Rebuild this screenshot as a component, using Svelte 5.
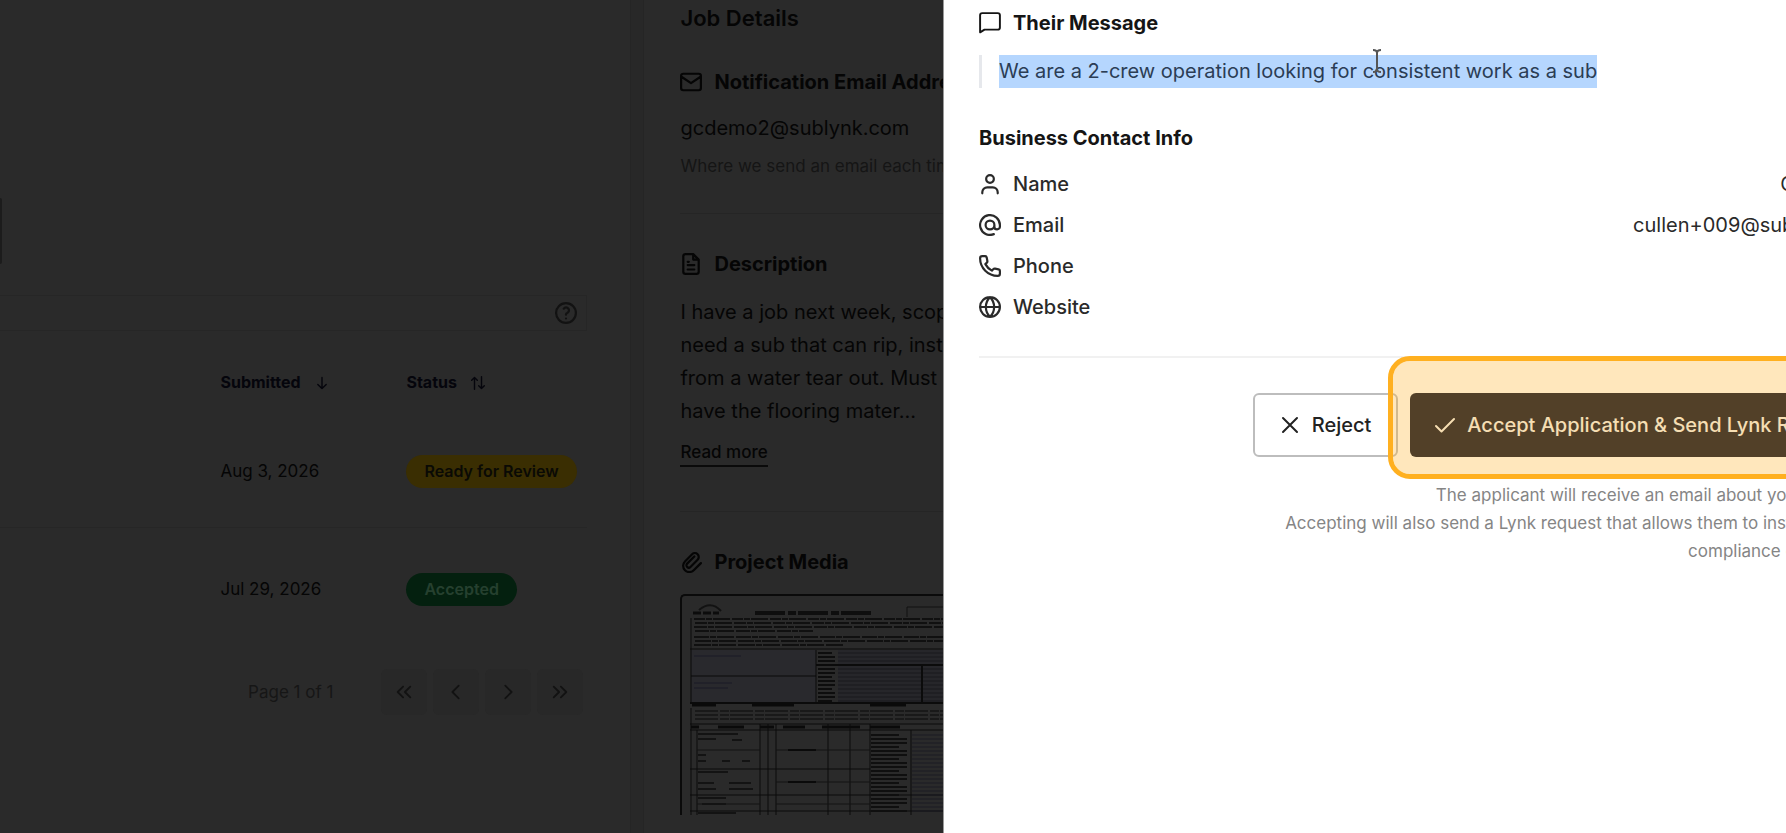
<script>
  const contacts = [
    { icon: 'user', label: 'Name', value: 'Cullen Lee' },
    { icon: 'at', label: 'Email', value: 'cullen+009@sublynk.com' },
    { icon: 'phone', label: 'Phone', value: '' },
    { icon: 'globe', label: 'Website', value: '' }
  ];
  const rows = [
    { date: 'Aug 3, 2026', status: 'Ready for Review', tone: 'review' },
    { date: 'Jul 29, 2026', status: 'Accepted', tone: 'accepted' }
  ];
  const description = [
    'I have a job next week, scope',
    'need a sub that can rip, install',
    'from a water tear out. Must',
    'have the flooring mater...'
  ];
  const pager = [
    { label: 'First page', icon: 'first' },
    { label: 'Previous page', icon: 'prev' },
    { label: 'Next page', icon: 'next' },
    { label: 'Last page', icon: 'last' }
  ];
  const paths = {
    message: 'M3 20.5V5a2 2 0 0 1 2-2h14a2 2 0 0 1 2 2v11a2 2 0 0 1-2 2H7l-4 2.500z',
    user: 'M12 4a3.500 3.500 0 1 1 0 7a3.500 3.500 0 0 1 0-7M5 20.500v-1a4.500 4.500 0 0 1 4.500-4.500h5a4.500 4.500 0 0 1 4.500 4.500v1',
    at: 'M16 12a4 4 0 1 1-8 0a4 4 0 0 1 8 0v1.5a2.5 2.5 0 0 0 5 0V12a9 9 0 1 0-5.5 8.3',
    phone: 'M5 3h2.500a1.500 1.500 0 0 1 1.500 1.200l.6 3.200q.2 1-.6 1.700l-1.200 1.200a14 14 0 0 0 5.900 5.900l1.200-1.200q.7-.8 1.700-.6l3.200.6a1.500 1.500 0 0 1 1.200 1.500V19a2 2 0 0 1-2 2A16 16 0 0 1 3 5a2 2 0 0 1 2-2z',
    globe: 'M12 3a9 9 0 1 0 0 18a9 9 0 0 0 0-18M3 12h18M12 3c-5 5-5 13 0 18M12 3c5 5 5 13 0 18',
    mail: 'M5 4.500h14a2 2 0 0 1 2 2v11a2 2 0 0 1-2 2H5a2 2 0 0 1-2-2v-11a2 2 0 0 1 2-2M3 7l9 6l9-6',
    file: 'M14 3v5h5M17 21H7a2 2 0 0 1-2-2V5a2 2 0 0 1 2-2h7l5 5v11a2 2 0 0 1-2 2zM9 10h1M9 13h6M9 17h6',
    clip: 'M15 7l-6.5 6.5a1.5 1.5 0 0 0 3 3L18 10a3 3 0 0 0-5-5l-6.500 6.500a5.500 5.500 0 0 0 8 8L21 13',
    close: 'M5 5l14 14M19 5L5 19',
    check: 'M3 13l5.500 5.500L21 6',
    down: 'M12 4v16M6 14l6 6l6-6',
    sort: 'M7 21V4M3 8l4-4l4 4M17 3v17M13 16l4 4l4-4',
    help: 'M12 3a9 9 0 1 0 0 18a9 9 0 0 0 0-18M12 17v.01M12 13.500a1.500 1.500 0 0 1 1-1.500a2.600 2.600 0 1 0-3-4',
    first: 'M11 6l-6 6l6 6M19 6l-6 6l6 6',
    prev: 'M15 5l-7 7l7 7',
    next: 'M9 5l7 7l-7 7',
    last: 'M5 6l6 6l-6 6M13 6l6 6l-6 6'
  };
  const fineLines = [23, 27, 31, 35, 41, 45, 49];
  const formLines = Array.from({ length: 13 }, (_, i) => 57 + i * 4);
  const tableLines = Array.from({ length: 20 }, (_, i) => 139 + i * 4);
</script>

{#snippet icon(name, size = 22, weight = 2)}
  <svg class="icon" width={size} height={size} viewBox="2 2 20 20" fill="none" stroke="currentColor"
    stroke-width={weight} stroke-linecap="round" stroke-linejoin="round" aria-hidden="true">
    <path d={paths[name]} />
  </svg>
{/snippet}

<div class="page">
  <main>
    <div class="stub"></div>
    <div class="toolbar">
      <button class="plain" aria-label="Help">{@render icon('help')}</button>
    </div>
    <table>
      <thead>
        <tr>
          <th class="lead"></th>
          <th><button class="sorter">Submitted {@render icon('down', 14)}</button></th>
          <th><button class="sorter">Status {@render icon('sort', 14)}</button></th>
        </tr>
      </thead>
      <tbody>
        {#each rows as row}
          <tr>
            <td></td>
            <td>{row.date}</td>
            <td><span class="badge {row.tone}">{row.status}</span></td>
          </tr>
        {/each}
      </tbody>
    </table>
    <nav aria-label="Pages">
      <span>Page 1 of 1</span>
      <div class="pager">
        {#each pager as p}
          <button aria-label={p.label}>{@render icon(p.icon, 18)}</button>
        {/each}
      </div>
    </nav>
  </main>

  <div class="gutter"></div>

  <aside>
    <h1>Job Details</h1>
    <section>
      <h2>{@render icon('mail')}Notification Email Address</h2>
      <p class="email">gcdemo2@sublynk.com</p>
      <p class="hint">Where we send an email each time</p>
    </section>
    <section>
      <h2>{@render icon('file')}Description</h2>
      <p class="description">
        {#each description as line}<span>{line}</span>{/each}
      </p>
      <button class="more">Read more</button>
    </section>
    <section>
      <h2>{@render icon('clip')}Project Media</h2>
      <div class="media">
        <svg width="420" height="219" viewBox="0 0 420 219" role="img" aria-label="Certificate of liability insurance">
          <path d="M11 17h8M21 17h8M31 17h6" stroke="#0c0c0c" stroke-width="3" />
          <path d="M17 14q12-10 22 1" fill="none" stroke="#121212" stroke-width="2" />
          <path d="M73 17h119" stroke="#0e0e0e" stroke-width="4" stroke-dasharray="30 3 8 2" />
          <path d="M225 21v-10h100" fill="none" stroke="#101010" />
          {#each fineLines as y, i}
            <path d="M{12 + (i % 2)} {y}h{i === 3 ? 118 : i === 6 ? 150 : 400}" stroke="#101010" stroke-width="2"
              stroke-dasharray="{11 + i} 1 6 1 17 2" />
          {/each}
          <rect x="9" y="54" width="125" height="52" fill="#29292d" />
          <rect x="156" y="54" width="260" height="52" fill="#26262a" />
          <path d="M9 22V106M8 53H400M9 80H134M134 54V106" fill="none" stroke="#0b0b0b" />
          <path d="M12 60h47M12 87h38M12 92h34" stroke="#1b1b27" stroke-width="1" />
          {#each formLines as y, i}
            <path d="M136 {y}h{i % 3 ? 17 : 14}" stroke="#0d0d0d" stroke-width="2" />
            <path d="M156 {y}h240" stroke="#18181c" />
          {/each}
          <path d="M134 69H400M240 69V106M8 107H400" stroke="#0b0b0b" stroke-width="2" />
          <path d="M10 109h24M70 109h42M188 109h36" stroke="#0a0a0a" stroke-width="3" />
          <path d="M13 115h380M13 119h370M13 123h380" stroke="#191919" stroke-width="2" stroke-dasharray="23 2 9 1" />
          <path d="M8 128H400M8 134H400M8 173H188M8 199H400M8 215H400" stroke="#0a0a0a" stroke-width="1" />
          <path d="M9 131h8M36 131h26M78 131h14M101 131h22M140 131h38M188 131h30" stroke="#0a0a0a" stroke-width="3" />
          <path d="M9 112V219M15 134V219M78 128V219M86 128V219M94 128V219M146 128V219M168 128V219M188 128V219M229 134V219"
            fill="none" stroke="#0b0b0b" />
          <path d="M15 154h63M94 154h94M94 186h94M15 208h63M94 208h94" stroke="#121212" />
          <path d="M106 154h28M106 186h28" stroke="#0a0a0a" stroke-width="2" />
          <path d="M16 138h40M16 143h18M50 144h10M16 159h8M16 165h8M40 165h8M60 165h8M16 176h30M16 187h16M47 187h22M16 193h18M47 193h24M16 202h28M20 208h24M16 217h38"
            stroke="#131313" stroke-width="2" />
          {#each tableLines as y, i}
            <path d="M189 {y}h{i % 3 ? 36 : 28}" stroke="#0f0f0f" stroke-width="2" />
            <path d="M230 {y}h170" stroke="#1a1a22" />
          {/each}
        </svg>
      </div>
    </section>
  </aside>

  <div class="drawer" role="dialog" aria-label="Application">
    <h2>{@render icon('message', 22, 1.75)}Their Message</h2>
    <blockquote>
      <mark>We are a 2-crew operation looking for consistent work as a sub</mark>
      <svg class="caret" width="10" height="24" viewBox="0 0 10 24" fill="none" stroke="#555" stroke-width="2" aria-hidden="true">
        <path d="M1 1q4 0 4 3v16q0 3-4 3M9 1q-4 0-4 3v16q0 3 4 3" />
      </svg>
    </blockquote>
    <h2>Business Contact Info</h2>
    <dl>
      {#each contacts as c}
        <div>
          <dt>{@render icon(c.icon)}{c.label}</dt>
          <dd>{c.value}</dd>
        </div>
      {/each}
    </dl>
    <footer>
      <div class="actions">
        <button class="reject">{@render icon('close', 20)}Reject</button>
        <div class="spot">
          <button class="accept">{@render icon('check', 20)}Accept Application &amp; Send Lynk Request</button>
        </div>
      </div>
      <p>The applicant will receive an email about your decision.<br />
        Accepting will also send a Lynk request that allows them to instantly share<br />
        compliance documents.</p>
    </footer>
  </div>
</div>

<style>
  :global(body) { margin: 0; background: #2a2a2a; }
  .page {
    position: relative;
    display: flex;
    height: 100vh;
    overflow: hidden;
    background: #2a2a2a;
    color: #050505;
    font: 400 20px/33px Inter, sans-serif;
  }
  h1, h2, p, dl, dd, blockquote { margin: 0; }
  button { font: inherit; color: inherit; cursor: pointer; }
  .icon { flex: none; display: block; }
  h2 {
    display: flex;
    align-items: center;
    gap: 12px;
    font-size: 20px;
    line-height: 32px;
    font-weight: 700;
    white-space: nowrap;
  }

  main { flex: 0 0 35.3%; box-sizing: border-box; padding-right: 43px; font-size: 17px; }
  .stub { width: 2px; height: 66px; margin-top: 198px; background: #1c1c1c; border-radius: 0 4px 4px 0; }
  .toolbar {
    display: flex;
    justify-content: flex-end;
    align-items: center;
    height: 34px;
    margin-top: 31px;
    padding-right: 9px;
    border: 1px solid #262626;
    border-left: 0;
  }
  .plain { padding: 0; border: 0; background: none; color: #121212; }
  table { width: 100%; border-collapse: collapse; table-layout: fixed; margin-top: 24px; }
  th, td { padding: 0; text-align: left; }
  th { width: 186px; height: 55px; }
  th:last-child { width: 181px; }
  .lead { width: auto; }
  td { height: 111px; padding-top: 6px; border-bottom: 1px solid #262626; }
  tr:last-child td { border: 0; }
  .sorter {
    display: flex;
    align-items: center;
    gap: 14px;
    padding: 0;
    border: 0;
    background: none;
    font-size: 16px;
    font-weight: 700;
    color: #05050c;
  }
  .badge {
    display: inline-block;
    padding: 0 18px;
    border-radius: 17px;
    font-size: 16px;
    font-weight: 600;
    white-space: nowrap;
  }
  .review { background: #3a2e02; color: #0a0a05; }
  .accepted { background: #04200f; color: #26402f; }
  nav {
    display: flex;
    justify-content: flex-end;
    align-items: center;
    gap: 48px;
    margin-top: 24px;
    padding-right: 4px;
    color: #161616;
  }
  .pager { display: flex; gap: 6px; }
  .pager button {
    display: grid;
    place-items: center;
    width: 46px;
    height: 46px;
    padding: 0;
    border: 0;
    border-radius: 6px;
    background: #282828;
    color: #121212;
  }

  .gutter { flex: none; width: 12px; background: #282828; border: solid #252525; border-width: 0 1px; }

  aside { flex: none; box-sizing: border-box; width: calc(17.5% - 14px); overflow: hidden; padding-left: 36px; }
  h1 { font-size: 22px; line-height: 36px; font-weight: 600; }
  section { padding-bottom: 30px; border-bottom: 1px solid #252525; }
  section + section { padding-top: 34px; }
  h1 + section { padding-top: 30px; }
  section:last-child { border: 0; }
  .email { margin-top: 14px; }
  .hint { margin-top: 5px; font-size: 17px; color: #151515; white-space: nowrap; }
  .description { margin-top: 16px; }
  .description span { display: block; white-space: nowrap; }
  .more { display: block; margin: 11px 0 14px; padding: 0; border: 0; border-bottom: 2px solid #0a0a0a; background: none; font-size: 17px; line-height: 26px; font-weight: 500; }
  .media { margin-top: 16px; width: 420px; height: 219px; border: solid #0a0a0a; border-width: 2px 0 0 2px; border-radius: 5px 0 0 0; overflow: hidden; }

  .drawer {
    position: absolute;
    top: 0;
    bottom: 0;
    left: 52.8%;
    right: -94px;
    box-sizing: border-box;
    padding: 7px 0 0 35px;
    border-left: 1px solid #999;
    background: #fff;
    color: #2a2a2a;
  }
  .drawer > h2 { color: #151515; }
  blockquote { position: relative; width: fit-content; margin: 16px 0 34px; padding-left: 17px; border-left: 3px solid #e6e8ec; white-space: nowrap; }
  mark { display: block; background: #b5d6fe; color: #2b3d55; }
  .caret { position: absolute; left: 390px; top: -6px; }
  dl { display: grid; gap: 9px; margin-top: 14px; }
  dl div { display: flex; justify-content: space-between; line-height: 32px; }
  dt { display: flex; align-items: center; gap: 12px; font-weight: 500; }
  footer { margin-top: 33px; border-top: 2px solid #f1f1f1; text-align: right; }
  .actions { display: flex; justify-content: flex-end; gap: 12px; margin: 35px 0 24px; }
  .actions button {
    display: flex;
    align-items: center;
    height: 64px;
    gap: 12px;
    padding: 0 25px;
    border: 2px solid #bdbdbd;
    border-radius: 6px;
    background: #fff;
    color: #222;
    font-weight: 500;
    white-space: nowrap;
  }
  .spot { position: relative; }
  .spot::after {
    content: '';
    position: absolute;
    inset: -37px -22px -22px;
    border: 5px solid #ffb020;
    border-radius: 22px;
    background: rgba(255, 176, 32, 0.3);
    background-clip: padding-box;
    pointer-events: none;
  }
  .actions .accept { border: 0; background: #08112b; color: #f2f2f2; }
  footer p { font-size: 17px; line-height: 28px; color: #858585; white-space: nowrap; }
</style>
